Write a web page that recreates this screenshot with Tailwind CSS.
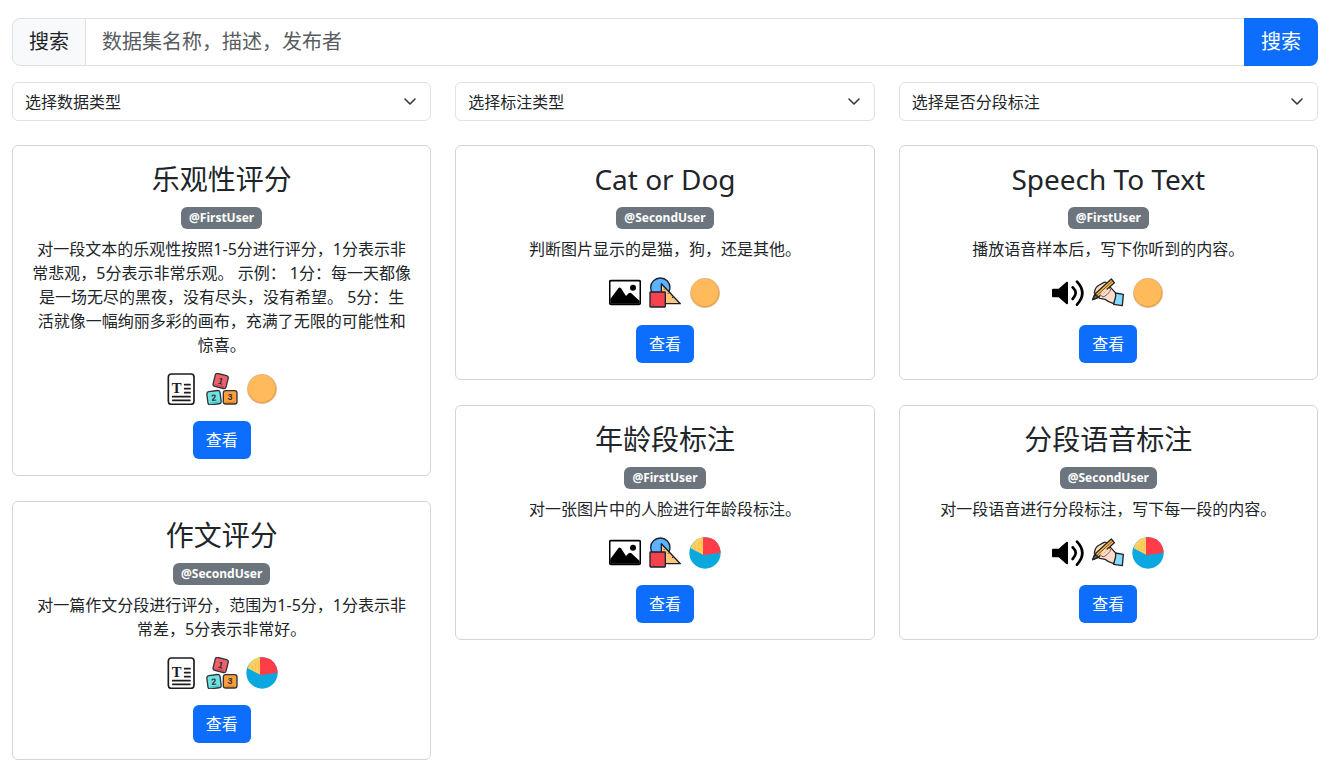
<!DOCTYPE html>
<html lang="zh-CN">
<head>
<meta charset="utf-8">
<meta name="viewport" content="width=device-width, initial-scale=1">
<title>数据集</title>
<script src="https://cdn.jsdelivr.net/npm/@tailwindcss/browser@4"></script>
</head>
<body class="bg-white pt-[18px] pr-5 pb-4 pl-3 font-['Noto_Sans','Noto_Sans_CJK_SC',sans-serif] text-base leading-6 text-[#212529]">

<svg class="hidden" aria-hidden="true">
  <symbol id="doc" viewBox="0 0 96 96">
    <rect x="7" y="3" width="77" height="91" rx="9" fill="#fff" stroke="#1c1c1e" stroke-width="5"/>
    <text x="32" y="61" text-anchor="middle" font-family="Liberation Serif, serif" font-weight="700" font-size="44" fill="#1c1c1e">T</text>
    <path d="M56 35h16M56 47h16M56 59h16M20 71h52M20 82h52" stroke="#1c1c1e" stroke-width="5" stroke-linecap="round" fill="none"/>
  </symbol>
  <symbol id="blocks" viewBox="0 0 96 96">
    <g stroke="#30343a" stroke-width="4" font-family="Liberation Sans, sans-serif" font-weight="700" font-size="27" text-anchor="middle">
      <g transform="rotate(14 44 24)">
        <rect x="24" y="4" width="40" height="40" rx="7" fill="#f0616a"/>
        <path d="M30 39h28" stroke="#d9434f"/>
        <text x="44" y="34" fill="#30343a" stroke="none">1</text>
      </g>
      <g transform="rotate(-7 24 74)">
        <rect x="4" y="54" width="40" height="40" rx="7" fill="#6fe3e1"/>
        <path d="M10 89h28" stroke="#45c4c8"/>
        <text x="24" y="83" fill="#30343a" stroke="none">2</text>
      </g>
      <rect x="52" y="53" width="41" height="40" rx="7" fill="#ff9f3a"/>
      <path d="M58 88h29" stroke="#ea8423"/>
      <text x="72" y="82" fill="#30343a" stroke="none">3</text>
    </g>
  </symbol>
  <symbol id="whole" viewBox="0 0 96 96">
    <circle cx="48" cy="48" r="44" fill="#f29e3e" stroke="#c9bfb0" stroke-width="2"/>
    <circle cx="47" cy="46" r="41" fill="#ffbb5b"/>
  </symbol>
  <symbol id="image" viewBox="0 0 96 96">
    <rect x="2" y="11" width="92" height="71" rx="4" fill="#fff" stroke="#000" stroke-width="5"/>
    <path d="M4 66 28 34q4-5 8 0L51 57 59 49q4-3 8 0L92 72V80H4z"/>
    <circle cx="72" cy="32" r="9"/>
  </symbol>
  <symbol id="shapes" viewBox="0 0 96 96">
    <g stroke="#17222e" stroke-width="4" stroke-linejoin="round">
      <circle cx="34" cy="32" r="29" fill="#5eb2ff"/>
      <path d="M37 20 94 80H37z" fill="#ffc57d"/>
      <rect x="3" y="45" width="46" height="45" rx="2" fill="#f5424f"/>
      <path d="M12 83h1M45 38l3-3M57 50l3-3M69 63l3-3" stroke-width="3"/>
    </g>
  </symbol>
  <symbol id="sound" viewBox="0 0 96 96">
    <path d="M3 35h17L43 15q5-3 5 3V78q0 6-5 3L20 61H3q-3 0-3-3V38q0-3 3-3z"/>
    <path d="M62 31q18 17 0 35M75 14q32 34 0 69" fill="none" stroke="#000" stroke-width="8" stroke-linecap="round"/>
  </symbol>
  <symbol id="write" viewBox="0 0 96 96">
    <g stroke="#242424" stroke-width="4" stroke-linejoin="round" stroke-linecap="round">
      <path d="M70 48 94 52 91 86 65 82z" fill="#83dcff"/>
      <path d="M7 48Q9 30 22 24L36 16q6-2 9 4L70 47Q73 55 70 63L65 80Q49 76 39 67L24 64q-8-3-5-10z" fill="#ffdccb"/>
      <path d="M2 68 9 51 58 6 67 17 19 61z" fill="#ffb84d"/>
      <path d="M2 68 9 51 19 61z" fill="#626a75"/>
      <path d="M14 56 62 12" fill="none" stroke-width="2"/>
      <path d="M28 54Q33 43 42 39" fill="none" stroke="#ffdccb" stroke-width="6"/>
      <path d="M52 33q7 3 2 10L45 53 36 59q-7 2-8-3" fill="#ffdccb" stroke-width="2"/>
    </g>
  </symbol>
  <symbol id="pie" viewBox="0 0 96 96">
    <circle cx="48" cy="48" r="47" fill="#0aa8df"/>
    <path d="M44 54 5 34A47 47 0 0 1 42 1z" fill="#ffd05f"/>
    <path d="M20 28v11M29 15v26M37 12v31" stroke="#f5b849" stroke-width="2"/>
    <path d="M42 55V1Q80-2 92 31l3 16z" fill="#ff3d49"/>
  </symbol>
</svg>

<form class="flex h-12 text-xl" onsubmit="return false">
  <label for="q" class="flex items-center rounded-l-lg border border-[#dee2e6] bg-[#f8f9fa] px-4">搜索</label>
  <input id="q" type="text" placeholder="数据集名称，描述，发布者" class="min-w-0 flex-1 border-y border-[#dee2e6] px-4 placeholder:text-[#595c5f]">
  <button class="rounded-r-lg bg-[#0d6efd] px-[17px] text-white">搜索</button>
</form>

<div class="mt-4 grid grid-cols-3 gap-6">
  <div class="grid items-center">
    <select aria-label="数据类型" class="col-start-1 row-start-1 h-[39px] w-full appearance-none rounded-md border border-[#dee2e6] bg-white px-3"><option>选择数据类型</option></select>
    <svg class="pointer-events-none col-start-1 row-start-1 mr-[13px] size-4 justify-self-end" viewBox="0 0 16 16" fill="none" stroke="#343a40" stroke-width="1.600" stroke-linecap="round" stroke-linejoin="round"><path d="m3 5 5 5 5-5"/></svg>
  </div>
  <div class="grid items-center">
    <select aria-label="标注类型" class="col-start-1 row-start-1 h-[39px] w-full appearance-none rounded-md border border-[#dee2e6] bg-white px-3"><option>选择标注类型</option></select>
    <svg class="pointer-events-none col-start-1 row-start-1 mr-[13px] size-4 justify-self-end" viewBox="0 0 16 16" fill="none" stroke="#343a40" stroke-width="1.600" stroke-linecap="round" stroke-linejoin="round"><path d="m3 5 5 5 5-5"/></svg>
  </div>
  <div class="grid items-center">
    <select aria-label="是否分段标注" class="col-start-1 row-start-1 h-[39px] w-full appearance-none rounded-md border border-[#dee2e6] bg-white px-3"><option>选择是否分段标注</option></select>
    <svg class="pointer-events-none col-start-1 row-start-1 mr-[13px] size-4 justify-self-end" viewBox="0 0 16 16" fill="none" stroke="#343a40" stroke-width="1.600" stroke-linecap="round" stroke-linejoin="round"><path d="m3 5 5 5 5-5"/></svg>
  </div>
</div>

<main class="mt-6 grid grid-cols-3 items-start gap-6 text-center">
  <div class="flex flex-col gap-[25px]">
    <article class="flex flex-col items-center rounded-md border border-[#d4d4d4] p-4">
      <h2 class="text-[28px] leading-[34px]">乐观性评分</h2>
      <span class="mt-[11px] rounded-md bg-[#6c757d] px-2 text-xs leading-[22px] font-bold text-white">@FirstUser</span>
      <p class="mt-2 px-0.5">对一段文本的乐观性按照1-5分进行评分，1分表示非常悲观，5分表示非常乐观。 示例： 1分：每一天都像是一场无尽的黑夜，没有尽头，没有希望。 5分：生<br>活就像一幅绚丽多彩的画布，充满了无限的可能性和<br>惊喜。</p>
      <div class="mt-4 flex gap-2"><svg class="size-8"><use href="#doc"/></svg><svg class="size-8"><use href="#blocks"/></svg><svg class="size-8"><use href="#whole"/></svg></div>
      <button class="mt-4 h-[38px] rounded-md bg-[#0d6efd] px-[13px] text-white">查看</button>
    </article>
    <article class="flex flex-col items-center rounded-md border border-[#d4d4d4] p-4">
      <h2 class="text-[28px] leading-[34px]">作文评分</h2>
      <span class="mt-[11px] rounded-md bg-[#6c757d] px-2 text-xs leading-[22px] font-bold text-white">@SecondUser</span>
      <p class="mt-2 px-0.5">对一篇作文分段进行评分，范围为1-5分，1分表示非常差，5分表示非常好。</p>
      <div class="mt-4 flex gap-2"><svg class="size-8"><use href="#doc"/></svg><svg class="size-8"><use href="#blocks"/></svg><svg class="size-8"><use href="#pie"/></svg></div>
      <button class="mt-4 h-[38px] rounded-md bg-[#0d6efd] px-[13px] text-white">查看</button>
    </article>
  </div>
  <div class="flex flex-col gap-[25px]">
    <article class="flex flex-col items-center rounded-md border border-[#d4d4d4] p-4">
      <h2 class="text-[28px] leading-[34px]">Cat or Dog</h2>
      <span class="mt-[11px] rounded-md bg-[#6c757d] px-2 text-xs leading-[22px] font-bold text-white">@SecondUser</span>
      <p class="mt-2 px-0.5">判断图片显示的是猫，狗，还是其他。</p>
      <div class="mt-4 flex gap-2"><svg class="size-8"><use href="#image"/></svg><svg class="size-8"><use href="#shapes"/></svg><svg class="size-8"><use href="#whole"/></svg></div>
      <button class="mt-4 h-[38px] rounded-md bg-[#0d6efd] px-[13px] text-white">查看</button>
    </article>
    <article class="flex flex-col items-center rounded-md border border-[#d4d4d4] p-4">
      <h2 class="text-[28px] leading-[34px]">年龄段标注</h2>
      <span class="mt-[11px] rounded-md bg-[#6c757d] px-2 text-xs leading-[22px] font-bold text-white">@FirstUser</span>
      <p class="mt-2 px-0.5">对一张图片中的人脸进行年龄段标注。</p>
      <div class="mt-4 flex gap-2"><svg class="size-8"><use href="#image"/></svg><svg class="size-8"><use href="#shapes"/></svg><svg class="size-8"><use href="#pie"/></svg></div>
      <button class="mt-4 h-[38px] rounded-md bg-[#0d6efd] px-[13px] text-white">查看</button>
    </article>
  </div>
  <div class="flex flex-col gap-[25px]">
    <article class="flex flex-col items-center rounded-md border border-[#d4d4d4] p-4">
      <h2 class="text-[28px] leading-[34px]">Speech To Text</h2>
      <span class="mt-[11px] rounded-md bg-[#6c757d] px-2 text-xs leading-[22px] font-bold text-white">@FirstUser</span>
      <p class="mt-2 px-0.5">播放语音样本后，写下你听到的内容。</p>
      <div class="mt-4 flex gap-2"><svg class="size-8"><use href="#sound"/></svg><svg class="size-8"><use href="#write"/></svg><svg class="size-8"><use href="#whole"/></svg></div>
      <button class="mt-4 h-[38px] rounded-md bg-[#0d6efd] px-[13px] text-white">查看</button>
    </article>
    <article class="flex flex-col items-center rounded-md border border-[#d4d4d4] p-4">
      <h2 class="text-[28px] leading-[34px]">分段语音标注</h2>
      <span class="mt-[11px] rounded-md bg-[#6c757d] px-2 text-xs leading-[22px] font-bold text-white">@SecondUser</span>
      <p class="mt-2 px-0.5">对一段语音进行分段标注，写下每一段的内容。</p>
      <div class="mt-4 flex gap-2"><svg class="size-8"><use href="#sound"/></svg><svg class="size-8"><use href="#write"/></svg><svg class="size-8"><use href="#pie"/></svg></div>
      <button class="mt-4 h-[38px] rounded-md bg-[#0d6efd] px-[13px] text-white">查看</button>
    </article>
  </div>
</main>
</body>
</html>
